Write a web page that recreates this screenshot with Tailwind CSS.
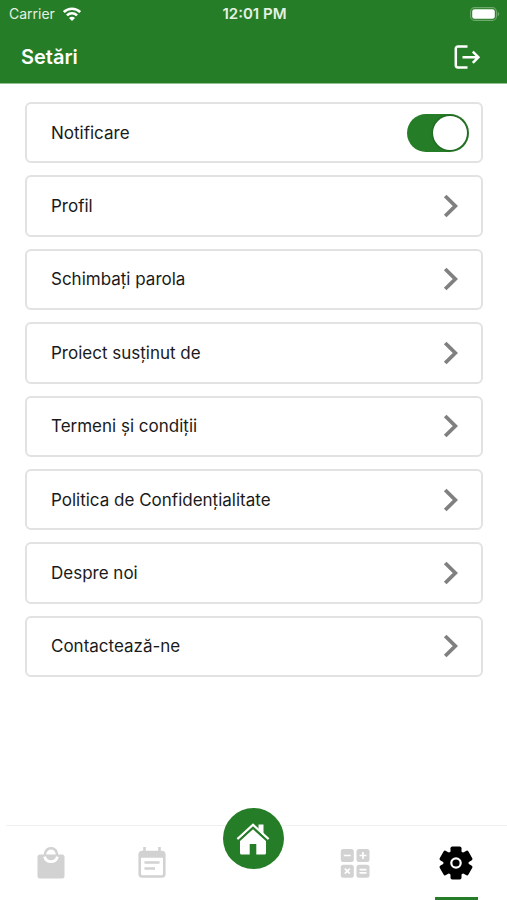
<!DOCTYPE html>
<html lang="ro">
<head>
<meta charset="utf-8">
<meta name="viewport" content="width=device-width, initial-scale=1">
<title>Setări</title>
<script src="https://cdn.jsdelivr.net/npm/@tailwindcss/browser@4"></script>
</head>
<body class="flex min-h-screen flex-col bg-white font-['Inter','Liberation_Sans',sans-serif] text-[#1a1a1a]">
  <header class="border-b border-[#8fc191] bg-[#267d27] text-white">
    <div class="grid h-7 grid-cols-3 items-center pl-[9px] pr-[7px] text-[14px] leading-4 text-[#e4f1e2]">
      <div class="flex items-center gap-2">
        <span>Carrier</span>
        <svg class="h-[14px] w-[18px]" viewBox="0 0 18 14" fill="none" stroke="#fff" stroke-width="2.6" aria-hidden="true">
          <path d="M.8 5C5.400.600 12.600.600 17.200 5"/>
          <path d="M3.900 8.400c3-2.800 7.200-2.800 10.200 0"/>
          <path d="M9 14 6 10.900c1.700-1.500 4.300-1.500 6 0Z" fill="#fff" stroke="none"/>
        </svg>
      </div>
      <span class="text-center text-[15px] font-semibold">12:01 PM</span>
      <svg class="h-[14px] w-[30px] justify-self-end" viewBox="0 0 30 14" aria-hidden="true">
        <rect x=".6" y=".6" width="25.800" height="12.800" rx="4" fill="none" stroke="#6faa6d" stroke-width="1.100"/>
        <rect x="2.200" y="2.300" width="22.600" height="9.400" rx="2.300" fill="#fff"/>
        <path d="M27.700 4.800c2 .8 2 3.600 0 4.400Z" fill="#6faa6d"/>
      </svg>
    </div>
    <div class="flex h-[55px] items-center justify-between pb-[1px] pl-[21px] pr-[26px] pt-1">
      <h1 class="text-[20px] font-semibold leading-6">Setări</h1>
      <button type="button" aria-label="Deconectare">
        <svg class="h-6 w-[27px]" viewBox="0 0 27 24" fill="none" stroke="#fff" stroke-width="2.500" aria-hidden="true">
          <path d="M13.500 1.600H4a2.200 2.200 0 0 0-2.200 2.200v16.400A2.200 2.200 0 0 0 4 22.400h9.500"/>
          <path d="M8.500 12.200h16.200M18.800 6.600l5.600 5.600-5.600 5.600"/>
        </svg>
      </button>
    </div>
  </header>

  <svg class="hidden" aria-hidden="true">
    <symbol id="chevron" viewBox="0 0 16 24">
      <path d="M2.200 2 12.300 12 2.200 22" fill="none" stroke="#808080" stroke-width="3.800"/>
    </symbol>
  </svg>

  <main class="grid flex-1 auto-rows-fr gap-3 pb-[148px] pl-[25px] pr-6 pt-[18px] text-[17px] leading-6">
    <label class="flex min-h-[60px] items-center justify-between rounded-md border-2 border-[#e2e2e2] pl-6 pr-3">
      <span>Notificare</span>
      <input type="checkbox" role="switch" checked class="h-[38px] w-[62px] appearance-none rounded-full bg-[#a3a3a3] p-[2px] before:block before:size-[34px] before:rounded-full before:bg-white before:shadow-[0_0_3px_rgba(0,0,0,0.45)] checked:bg-[#267d27] checked:before:ml-6">
    </label>
    <a href="#profil" class="flex min-h-[60px] items-center justify-between rounded-md border-2 border-[#e2e2e2] pl-6 pr-[22px]"><span>Profil</span><svg class="h-6 w-4" aria-hidden="true"><use href="#chevron"/></svg></a>
    <a href="#parola" class="flex min-h-[60px] items-center justify-between rounded-md border-2 border-[#e2e2e2] pl-6 pr-[22px]"><span>Schimbați parola</span><svg class="h-6 w-4" aria-hidden="true"><use href="#chevron"/></svg></a>
    <a href="#proiect" class="flex min-h-[60px] items-center justify-between rounded-md border-2 border-[#e2e2e2] pl-6 pr-[22px]"><span>Proiect susținut de</span><svg class="h-6 w-4" aria-hidden="true"><use href="#chevron"/></svg></a>
    <a href="#termeni" class="flex min-h-[60px] items-center justify-between rounded-md border-2 border-[#e2e2e2] pl-6 pr-[22px]"><span>Termeni și condiții</span><svg class="h-6 w-4" aria-hidden="true"><use href="#chevron"/></svg></a>
    <a href="#confidentialitate" class="flex min-h-[60px] items-center justify-between rounded-md border-2 border-[#e2e2e2] pl-6 pr-[22px]"><span>Politica de Confidențialitate</span><svg class="h-6 w-4" aria-hidden="true"><use href="#chevron"/></svg></a>
    <a href="#despre" class="flex min-h-[60px] items-center justify-between rounded-md border-2 border-[#e2e2e2] pl-6 pr-[22px]"><span>Despre noi</span><svg class="h-6 w-4" aria-hidden="true"><use href="#chevron"/></svg></a>
    <a href="#contact" class="flex min-h-[60px] items-center justify-between rounded-md border-2 border-[#e2e2e2] pl-6 pr-[22px]"><span>Contactează-ne</span><svg class="h-6 w-4" aria-hidden="true"><use href="#chevron"/></svg></a>
  </main>

  <div class="ml-[6px] border-t border-[#f0f0f0]"></div>
  <nav class="grid h-[74px] grid-cols-5" aria-label="Navigare principală">
    <a href="#magazin" aria-label="Magazin" class="flex items-center justify-center">
      <svg class="size-8" viewBox="0 0 32 32" aria-hidden="true">
        <rect x="2.500" y="7.500" width="27" height="24" rx="2.500" fill="#d2d2d2"/>
        <circle cx="16" cy="7.200" r="6" fill="none" stroke="#d2d2d2" stroke-width="2.600"/>
        <path d="M9.600 9.600a6.600 6.600 0 0 0 12.800 0" fill="none" stroke="#fff" stroke-width="2.800"/>
      </svg>
    </a>
    <a href="#calendar" aria-label="Calendar" class="flex items-center justify-center">
      <svg class="size-8" viewBox="0 0 32 32" fill="none" stroke="#d2d2d2" aria-hidden="true">
        <rect x="3.700" y="5" width="24.600" height="24.500" rx="2.500" stroke-width="2.600"/>
        <path d="M3.500 8h25" stroke-width="5.500"/>
        <path d="M8.500 0v6M23.500 0v6" stroke-width="2.600"/>
        <path d="M8.500 15.500h15M8.500 21.500h10.500" stroke-width="2.600"/>
      </svg>
    </a>
    <a href="#acasa" aria-label="Acasă" class="-mt-[18px] flex size-[61px] items-center justify-center justify-self-center rounded-full bg-[#267d27]">
      <svg class="h-8 w-[34px]" viewBox="0 0 34 32" fill="#fff" aria-hidden="true">
        <path d="M22.500 1.500h5v11l-5-4.800Z"/>
        <path d="m1.400 16.200 15.600-14.400 15.600 14.400" fill="none" stroke="#fff" stroke-width="2.300"/>
        <path d="M17 5.300 31 18.300" fill="none" stroke="#267d27" stroke-width="1.500"/>
        <path d="M17 6.300 30 18v12a1.500 1.500 0 0 1-1.500 1.500h-8.200v-10.500h-6.600v10.500H5.500A1.500 1.500 0 0 1 4 30V18Z"/>
        <path d="M2.500 17.800 17 4.500l14.500 13.300" fill="none" stroke="#267d27" stroke-width="1.300"/>
      </svg>
    </a>
    <a href="#calculator" aria-label="Calculator" class="flex items-center justify-center">
      <svg class="size-8" viewBox="0 0 32 32" aria-hidden="true">
        <g fill="#d2d2d2">
          <rect x="1.800" y="2" width="13" height="13" rx="2.500"/>
          <rect x="17.500" y="2" width="13" height="13" rx="2.500"/>
          <rect x="1.800" y="17.700" width="13" height="13" rx="2.500"/>
          <rect x="17.500" y="17.700" width="13" height="13" rx="2.500"/>
        </g>
        <path d="M4.800 8.500h7M20.500 8.500h7M24 5v7M5.800 21.700l5 5M10.800 21.700l-5 5M20.500 22.600h7M20.500 25.900h7" fill="none" stroke="#fff" stroke-width="1.700"/>
      </svg>
    </a>
    <a href="#setari" aria-label="Setări" aria-current="page" class="flex flex-col items-center">
      <span class="flex flex-1 items-center pt-[2px]">
        <svg class="h-[34px] w-[34px]" viewBox="0 0 34 34" aria-hidden="true">
          <circle cx="17" cy="17" r="12.600"/>
          <rect x="11.500" y=".5" width="11" height="33" rx="1.800"/>
          <rect x="11.500" y=".5" width="11" height="33" rx="1.800" transform="rotate(60 17 17)"/>
          <rect x="11.500" y=".5" width="11" height="33" rx="1.800" transform="rotate(120 17 17)"/>
          <circle cx="17" cy="17" r="4.700" fill="none" stroke="#fff" stroke-width="2.200"/>
        </svg>
      </span>
      <span class="h-[3px] w-[43px] bg-[#267d27]"></span>
    </a>
  </nav>
</body>
</html>
